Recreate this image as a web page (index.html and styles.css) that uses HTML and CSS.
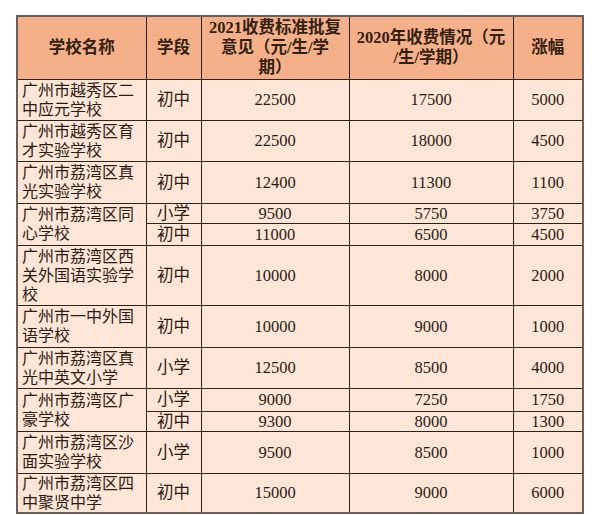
FILE: index.html
```html
<!DOCTYPE html>
<html lang="zh-CN">
<head>
<meta charset="utf-8">
<title>收费表</title>
<link rel="stylesheet" href="styles.css">
</head>
<body>
<table class="fees">
  <colgroup>
    <col class="c-name">
    <col class="c-stage">
    <col class="c-2021">
    <col class="c-2020">
    <col class="c-rise">
  </colgroup>
  <thead>
    <tr class="h-head">
      <th>学校名称</th>
      <th>学段</th>
      <th>2021收费标准批复<br>意见（元/生/学<br>期）</th>
      <th>2020年收费情况（元<br>/生/学期）</th>
      <th>涨幅</th>
    </tr>
  </thead>
  <tbody>
    <tr class="h41">
      <td class="name">广州市越秀区二<br>中应元学校</td>
      <td>初中</td><td>22500</td><td>17500</td><td>5000</td>
    </tr>
    <tr class="h41">
      <td class="name">广州市越秀区育<br>才实验学校</td>
      <td>初中</td><td>22500</td><td>18000</td><td>4500</td>
    </tr>
    <tr class="h42">
      <td class="name">广州市荔湾区真<br>光实验学校</td>
      <td>初中</td><td>12400</td><td>11300</td><td>1100</td>
    </tr>
    <tr class="h20">
      <td class="name" rowspan="2">广州市荔湾区同<br>心学校</td>
      <td>小学</td><td>9500</td><td>5750</td><td>3750</td>
    </tr>
    <tr class="h22">
      <td>初中</td><td>11000</td><td>6500</td><td>4500</td>
    </tr>
    <tr class="h60">
      <td class="name">广州市荔湾区西<br>关外国语实验学<br>校</td>
      <td>初中</td><td>10000</td><td>8000</td><td>2000</td>
    </tr>
    <tr class="h42">
      <td class="name">广州市一中外国<br>语学校</td>
      <td>初中</td><td>10000</td><td>9000</td><td>1000</td>
    </tr>
    <tr class="h41">
      <td class="name">广州市荔湾区真<br>光中英文小学</td>
      <td>小学</td><td>12500</td><td>8500</td><td>4000</td>
    </tr>
    <tr class="h23">
      <td class="name" rowspan="2">广州市荔湾区广<br>豪学校</td>
      <td>小学</td><td>9000</td><td>7250</td><td>1750</td>
    </tr>
    <tr class="h20">
      <td>初中</td><td>9300</td><td>8000</td><td>1300</td>
    </tr>
    <tr class="h42">
      <td class="name">广州市荔湾区沙<br>面实验学校</td>
      <td>小学</td><td>9500</td><td>8500</td><td>1000</td>
    </tr>
    <tr class="h40">
      <td class="name">广州市荔湾区四<br>中聚贤中学</td>
      <td>初中</td><td>15000</td><td>9000</td><td>6000</td>
    </tr>
  </tbody>
</table>
</body>
</html>
```

FILE: styles.css
```css
html, body {
  margin: 0;
  padding: 0;
  background: #ffffff;
}

body {
  padding: 15px 0 0 16px;
  font-family: "Liberation Serif", "Noto Sans CJK SC", serif;
  color: #2b1c14;
}

.fees {
  border-collapse: collapse;
  table-layout: fixed;
  width: 566px;
  border: 2px solid #6e5d54;
  font-size: 16px;
  line-height: 19px;
}

.c-name { width: 129px; }
.c-stage { width: 55px; }
.c-2021 { width: 148px; }
.c-2020 { width: 164px; }
.c-rise { width: 70px; }

.fees th,
.fees td {
  border: 1px solid #2e211a;
  padding: 0;
  text-align: center;
  vertical-align: middle;
  white-space: nowrap;
  overflow: hidden;
}

.fees th {
  background: #f3b089;
  font-weight: bold;
  font-size: 16.5px;
  line-height: 20px;
  color: #33200f;
}

.fees td {
  background: #fde5d8;
  font-size: 16.5px;
}

.fees td.name {
  text-align: left;
  padding-left: 4px;
  font-size: 16px;
}

.h-head { height: 63px; }
.h20 { height: 20px; }
.h22 { height: 22px; }
.h23 { height: 23px; }
.h40 { height: 40px; }
.h41 { height: 41px; }
.h42 { height: 42px; }
.h60 { height: 60px; }
```
